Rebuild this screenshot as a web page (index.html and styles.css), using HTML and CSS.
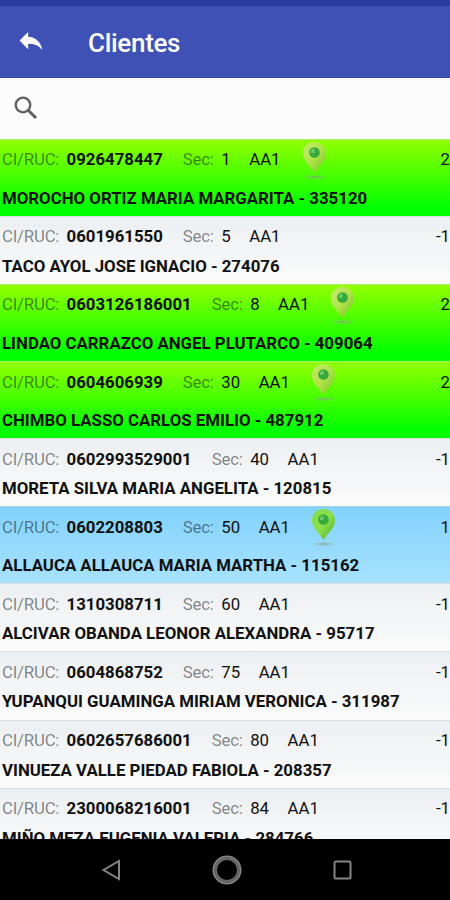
FILE: index.html
```html
<!DOCTYPE html>
<html lang="es">
<head>
<meta charset="utf-8">
<title>Clientes</title>
<link rel="stylesheet" href="styles.css">
</head>
<body>
<svg class="defs" width="0" height="0" aria-hidden="true">
  <defs>
    <linearGradient id="pale" x1="0" y1="0" x2="1" y2="1"><stop offset="0" stop-color="#c4ea70"/><stop offset=".5" stop-color="#b0e448"/><stop offset="1" stop-color="#72bf24"/></linearGradient>
    <linearGradient id="vivid" x1="0" y1="0" x2="1" y2="1"><stop offset="0" stop-color="#7fdc4c"/><stop offset=".5" stop-color="#8be04a"/><stop offset="1" stop-color="#4fae28"/></linearGradient>
    <radialGradient id="shade"><stop offset="0" stop-color="#7c9c78" stop-opacity=".75"/><stop offset="1" stop-color="#a0b8a0" stop-opacity="0"/></radialGradient>
    <g id="pin-base">
      <ellipse cx="13" cy="35" rx="13" ry="2.5" fill="url(#shade)"/>
      <path d="M12.500 0C5.500 0 1 5 1 11.500C1 18.500 7.500 23 12.500 31C17.500 23 24 18.500 24 11.500C24 5 19.500 0 12.500 0Z"/>
      <circle cx="12.500" cy="10.500" r="5.300" fill="#37a83c"/>
      <path d="M9 8.500a4.500 4.500 0 0 1 3.500-2v4.500H9Z" fill="#72c96a"/>
    </g>
  </defs>
</svg>
<div class="status"></div>
<header class="bar">
  <svg class="back" viewBox="0 0 24 21"><path d="M0 9L9 0V5C17 5.500 22 10 24 19C20 14 15 12 9 12.500V18Z" fill="#fff"/></svg>
  <h1>Clientes</h1>
</header>
<div class="search">
  <svg viewBox="0 0 24 24"><circle cx="9" cy="9" r="7.300" fill="none" stroke="#606060" stroke-width="2.300"/><path d="M14.500 14.500L22 22" stroke="#606060" stroke-width="3"/></svg>
</div>
<main class="list">
  <article class="row green"><div class="info"><span class="label">CI/RUC:</span><b>0926478447</b><span class="label sec">Sec:</span><span class="num">1</span><span class="zone">AA1</span><svg class="pin" viewBox="0 0 26 38" fill="url(#pale)"><use href="#pin-base"/></svg><span class="end">2</span></div><div class="name">MOROCHO ORTIZ MARIA MARGARITA - 335120</div></article>
  <article class="row"><div class="info"><span class="label">CI/RUC:</span><b>0601961550</b><span class="label sec">Sec:</span><span class="num">5</span><span class="zone">AA1</span><span class="end">-1</span></div><div class="name">TACO AYOL JOSE IGNACIO - 274076</div></article>
  <article class="row green"><div class="info"><span class="label">CI/RUC:</span><b>0603126186001</b><span class="label sec">Sec:</span><span class="num">8</span><span class="zone">AA1</span><svg class="pin" viewBox="0 0 26 38" fill="url(#pale)"><use href="#pin-base"/></svg><span class="end">2</span></div><div class="name">LINDAO CARRAZCO ANGEL PLUTARCO - 409064</div></article>
  <article class="row green"><div class="info"><span class="label">CI/RUC:</span><b>0604606939</b><span class="label sec">Sec:</span><span class="num">30</span><span class="zone">AA1</span><svg class="pin" viewBox="0 0 26 38" fill="url(#pale)"><use href="#pin-base"/></svg><span class="end">2</span></div><div class="name">CHIMBO LASSO CARLOS EMILIO - 487912</div></article>
  <article class="row"><div class="info"><span class="label">CI/RUC:</span><b>0602993529001</b><span class="label sec">Sec:</span><span class="num">40</span><span class="zone">AA1</span><span class="end">-1</span></div><div class="name">MORETA SILVA MARIA ANGELITA - 120815</div></article>
  <article class="row blue"><div class="info"><span class="label">CI/RUC:</span><b>0602208803</b><span class="label sec">Sec:</span><span class="num">50</span><span class="zone">AA1</span><svg class="pin" viewBox="0 0 26 38" fill="url(#vivid)"><use href="#pin-base"/></svg><span class="end">1</span></div><div class="name">ALLAUCA ALLAUCA MARIA MARTHA - 115162</div></article>
  <article class="row"><div class="info"><span class="label">CI/RUC:</span><b>1310308711</b><span class="label sec">Sec:</span><span class="num">60</span><span class="zone">AA1</span><span class="end">-1</span></div><div class="name">ALCIVAR OBANDA LEONOR ALEXANDRA - 95717</div></article>
  <article class="row"><div class="info"><span class="label">CI/RUC:</span><b>0604868752</b><span class="label sec">Sec:</span><span class="num">75</span><span class="zone">AA1</span><span class="end">-1</span></div><div class="name">YUPANQUI GUAMINGA MIRIAM VERONICA - 311987</div></article>
  <article class="row"><div class="info"><span class="label">CI/RUC:</span><b>0602657686001</b><span class="label sec">Sec:</span><span class="num">80</span><span class="zone">AA1</span><span class="end">-1</span></div><div class="name">VINUEZA VALLE PIEDAD FABIOLA - 208357</div></article>
  <article class="row"><div class="info"><span class="label">CI/RUC:</span><b>2300068216001</b><span class="label sec">Sec:</span><span class="num">84</span><span class="zone">AA1</span><span class="end">-1</span></div><div class="name">MIÑO MEZA EUGENIA VALERIA - 284766</div></article>
</main>
<nav class="nav">
  <svg viewBox="0 0 450 61" fill="none" stroke="#858585" stroke-width="2"><path d="M103.500 31L119 22V40Z"/><circle cx="227" cy="31" r="13.500" stroke-width="2"/><circle cx="227" cy="31" r="11.500" stroke="#666" stroke-width="3"/><rect x="334.500" y="22.500" width="16" height="17" rx="1.500"/></svg>
</nav>
</body>
</html>
```
FILE: styles.css
```css
* { box-sizing: border-box; }
body { margin: 0; width: 450px; height: 900px; display: flex; flex-direction: column; overflow: hidden; background: #fbfbfb; font-family: Roboto, sans-serif; color: #101010; }
.defs { position: absolute; }
.status { height: 6px; flex: none; background: #2c3c9c; }
.bar { height: 72px; flex: none; display: flex; align-items: center; background: #3f51b5; color: #fff; border-bottom: 1px solid #3546a6; padding-left: 19px; }
.back { width: 24px; height: 20px; }
.bar h1 { margin: 2px 0 0 45px; font-size: 26px; font-weight: 500; line-height: 32px; letter-spacing: -0.3px; }
.search { height: 60.700px; flex: none; padding: 18px 14px; background: #fcfcfc; }
.search svg { width: 24px; height: 24px; display: block; }
.list { flex: 1; min-height: 0; overflow: hidden; }
.row { height: 68.150px; padding: 0 0 0 2px; display: flex; flex-direction: column; border-top: 1px solid #dcdfe1; background: linear-gradient(#eceff2, #fbfbfb); }
.green, .blue { height: 77.100px; }
.green { border-top-color: #a9ee70; background: linear-gradient(#92ff00, #00ff00 90%); }
.blue { border-top-color: #a0d4ee; background: linear-gradient(#82d2fc, #a8e2ff); }
.info { height: 39px; flex: none; display: flex; align-items: center; font-size: 16.800px; line-height: 20px; white-space: nowrap; }
.row:not(.green):not(.blue) .info { margin-bottom: -9px; }
.label { width: 64.500px; color: rgba(0, 0, 0, .48); font-weight: 400; letter-spacing: -0.2px; }
b { font-weight: 700; }
.sec { width: 38.500px; margin-left: 20px; }
.zone { margin-left: 18.500px; }
.pin { width: 26px; height: 38px; margin: 3px 0 0 21px; }
.end { margin-left: auto; }
.name { height: 38px; flex: none; line-height: 38px; font-size: 16.820px; font-weight: 700; white-space: nowrap; }
.nav { height: 61px; flex: none; background: #000; }
.nav svg { display: block; width: 450px; height: 61px; }
```
